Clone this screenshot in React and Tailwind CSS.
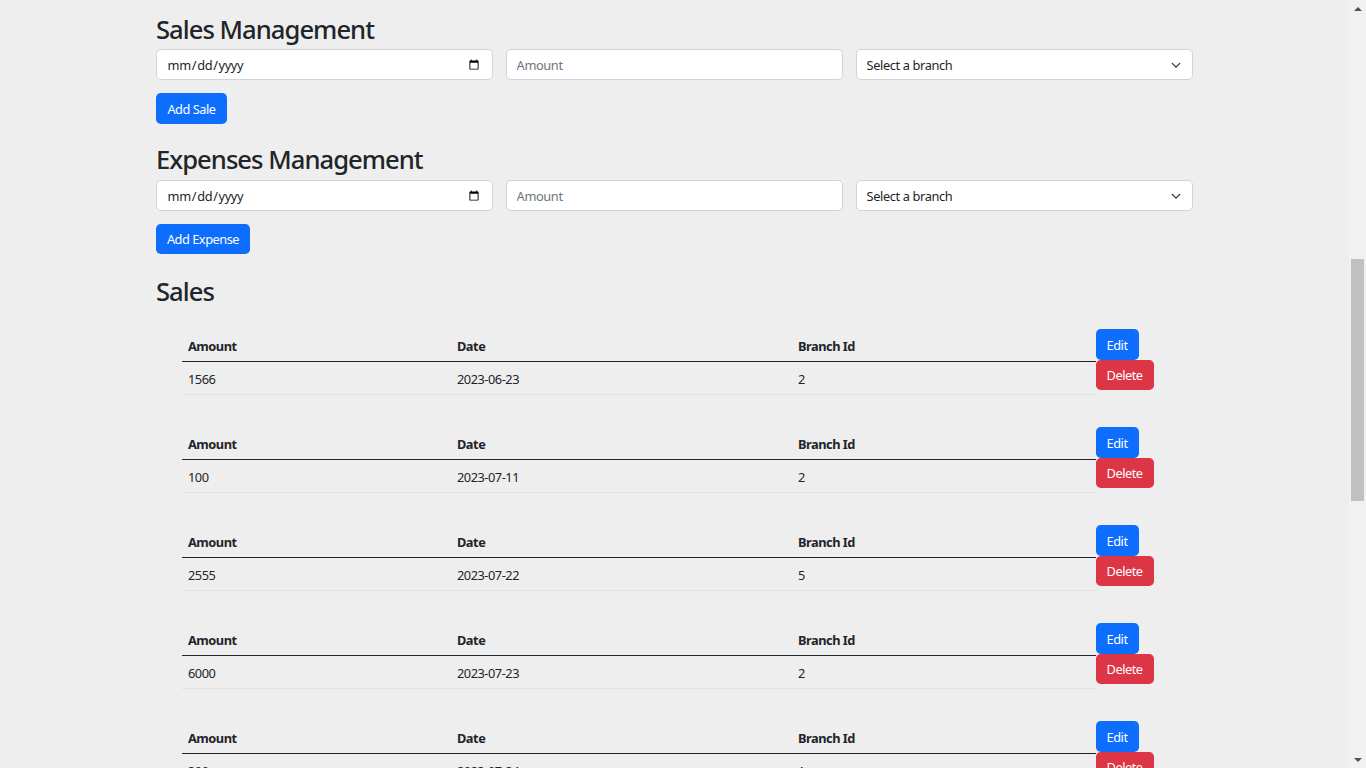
import React from "react";

const FONT = "font-['Noto_Sans',sans-serif] tracking-[-0.03em]";
const inputCls =
  "block w-full h-[30.4px] pl-[9.6px] pr-[9.6px] pt-[1.5px] border border-solid border-[#ced4da] rounded-[4.8px] bg-white text-[12.8px] leading-[19.2px] tracking-[-0.03em] text-[#212529] placeholder:text-[#6c757d] outline-none font-['Noto_Sans',sans-serif]";

function FormRow() {
  return (
    <div className="grid grid-cols-3 gap-[13px]">
      <input type="date" className={inputCls} />
      <input type="text" placeholder="Amount" className={inputCls} />
      <div className="relative">
        <select className={inputCls + " appearance-none"} defaultValue="">
          <option value="">Select a branch</option>
        </select>
        <svg
          className="pointer-events-none absolute right-[12px] top-1/2 -translate-y-1/2"
          width="10"
          height="7.5"
          viewBox="0 0 16 12"
        >
          <path
            d="m2 5 6 6 6-6"
            fill="none"
            stroke="#343a40"
            strokeWidth="2.2"
            strokeLinecap="round"
            strokeLinejoin="round"
          />
        </svg>
      </div>
    </div>
  );
}

function Btn({ children, className }) {
  return (
    <button
      className={
        "flex items-center justify-center h-[30.4px] pt-[1.5px] rounded-[4.8px] text-white text-[12.8px] leading-[19.2px] " +
        className
      }
    >
      {children}
    </button>
  );
}

const sales = [
  { amount: "1566", date: "2023-06-23", branch: "2" },
  { amount: "100", date: "2023-07-11", branch: "2" },
  { amount: "2555", date: "2023-07-22", branch: "5" },
  { amount: "6000", date: "2023-07-23", branch: "2" },
  { amount: "300", date: "2023-07-24", branch: "1" },
];

function SaleItem({ s }) {
  const cell = "px-[6.4px] pt-[7.4px] pb-[5.4px]";
  return (
    <li className="flex items-start h-[98px]">
      <table className="w-[914px] border-collapse text-[12.8px] leading-[19.2px] text-[#212529] table-fixed">
        <thead>
          <tr className="border-b-[1.6px] border-solid border-[#212529]">
            <th className={"w-[269px] text-left font-bold " + cell}>Amount</th>
            <th className={"w-[341px] text-left font-bold " + cell}>Date</th>
            <th className={"w-[304px] text-left font-bold " + cell}>Branch Id</th>
          </tr>
        </thead>
        <tbody>
          <tr className="border-b border-solid border-[#dee2e6]">
            <td className={cell}>{s.amount}</td>
            <td className={cell}>{s.date}</td>
            <td className={cell}>{s.branch}</td>
          </tr>
        </tbody>
      </table>
      <div className="flex flex-col items-start">
        <Btn className="w-[43px] bg-[#0d6efd]">Edit</Btn>
        <Btn className="w-[58px] bg-[#dc3545]">Delete</Btn>
      </div>
    </li>
  );
}

function Scrollbar() {
  return (
    <div className="flex h-[768px] w-[17px] shrink-0 flex-col bg-[#f1f1f1]">
      <div className="flex h-[17px] items-center justify-center">
        <div className="h-0 w-0 border-x-[4px] border-b-[4px] border-solid border-x-transparent border-b-[#505050]" />
      </div>
      <div className="h-[242px]" />
      <div className="mx-[2px] h-[242px] bg-[#c1c1c1]" />
      <div className="flex-1" />
      <div className="flex h-[17px] items-center justify-center">
        <div className="h-0 w-0 border-x-[4px] border-t-[4px] border-solid border-x-transparent border-t-[#505050]" />
      </div>
    </div>
  );
}

const H2 = "h-[31px] text-[25.6px] font-medium leading-[31px] tracking-[-0.038em]";

export default function App() {
  return (
    <div className={"flex h-[768px] w-full overflow-hidden bg-[#eeeeee] " + FONT}>
      <main className="h-[768px] flex-1 overflow-hidden">
        <div className="mx-auto w-[1037px] pt-[12px] text-[#212529]">
          <section>
            <h2 className={H2 + " pt-[2px] mb-[6.3px]"}>Sales Management</h2>
            <FormRow />
            <Btn className="mt-[13.5px] w-[71px] bg-[#0d6efd]">Add Sale</Btn>
          </section>
          <section className="mt-[19.3px]">
            <h2 className={H2 + " pt-[1.5px] mb-[6.3px]"}>Expenses Management</h2>
            <FormRow />
            <Btn className="mt-[13.3px] w-[94px] bg-[#0d6efd]">Add Expense</Btn>
          </section>
          <section className="mt-[20.5px]">
            <h2 className={H2 + " pt-[1px]"}>Sales</h2>
            <ul className="mt-[23.7px] pl-[25.6px]">
              {sales.map((s, i) => (
                <SaleItem key={i} s={s} />
              ))}
            </ul>
          </section>
        </div>
      </main>
      <Scrollbar />
    </div>
  );
}
